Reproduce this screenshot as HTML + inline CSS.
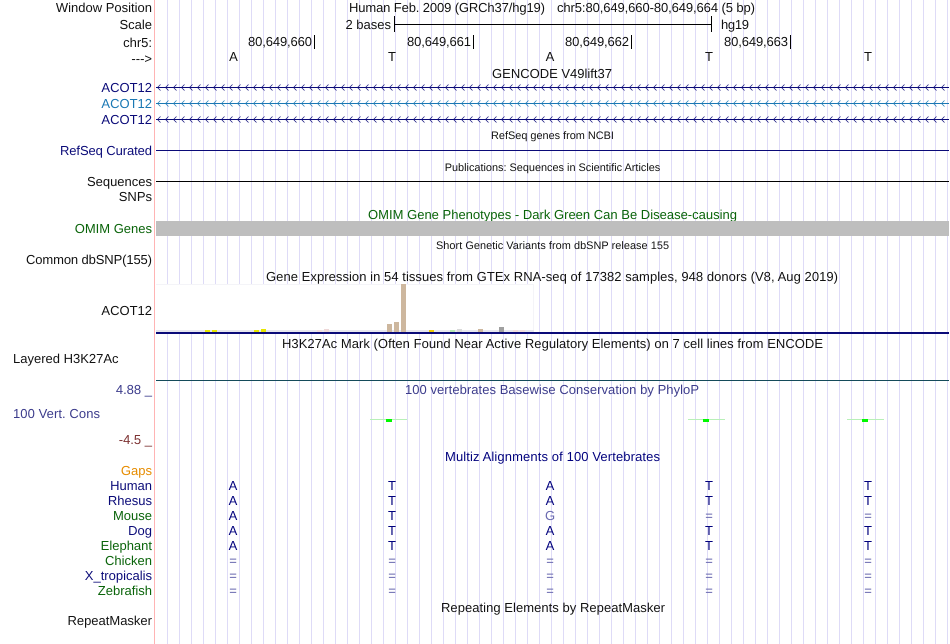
<!DOCTYPE html>
<html><head><meta charset="utf-8"><style>
html,body{margin:0;padding:0;background:#fff;width:950px;height:644px;overflow:hidden}
#g{position:absolute;left:167px;top:0;width:783px;height:644px;background-image:linear-gradient(to right,#dedbf7 0,#dedbf7 1px,transparent 1px,transparent 12px);background-size:12px 644px}
svg{display:block;position:absolute;left:0;top:0}
text{font-family:"Liberation Sans",sans-serif;font-size:13px;fill:#111;text-rendering:geometricPrecision}
.r{text-anchor:end}
.m{text-anchor:middle}
.s{font-size:10.9px}
.n{fill:#0a0a78}
.g{fill:#0a640a}
.b{fill:#00007d}
.e{fill:#6a6ab0}
</style></head><body>
<div id="g"></div>
<svg width="950" height="644" viewBox="0 0 950 644" xmlns="http://www.w3.org/2000/svg">
<defs>
<pattern id="c1" x="157" y="84" width="8" height="7" patternUnits="userSpaceOnUse"><path d="M3.500 .5L.5 3.500L3.500 6.500" fill="none" stroke="#0a0a78" stroke-width=".7"/></pattern>
<pattern id="c2" x="157" y="100" width="8" height="7" patternUnits="userSpaceOnUse"><path d="M3.500 .5L.5 3.500L3.500 6.500" fill="none" stroke="#1a78b4" stroke-width=".7"/></pattern>
<pattern id="c3" x="157" y="116" width="8" height="7" patternUnits="userSpaceOnUse"><path d="M3.500 .5L.5 3.500L3.500 6.500" fill="none" stroke="#0a0a78" stroke-width=".7"/></pattern>
</defs>
<rect x="154" y="0" width="1" height="644" fill="#ffb4b4"/>

<!-- header labels -->
<text class="r" x="152" y="12">Window Position</text>
<text class="r" x="152" y="29">Scale</text>
<text class="r" x="152" y="47">chr5:</text>
<text class="r" x="152" y="63">---&gt;</text>
<text x="349" y="12" textLength="196">Human Feb. 2009 (GRCh37/hg19)</text>
<text x="557" y="12" textLength="198">chr5:80,649,660-80,649,664 (5 bp)</text>
<text class="r" x="391" y="29">2 bases</text>
<rect x="394" y="16" width="1" height="16" fill="#000"/>
<rect x="394" y="24" width="318" height="1" fill="#000"/>
<rect x="711" y="16" width="1" height="16" fill="#000"/>
<text x="721" y="29" textLength="28">hg19</text>
<text x="248" y="46" textLength="64">80,649,660</text><rect x="314" y="35" width="1" height="14" fill="#000"/>
<text x="407" y="46" textLength="64">80,649,661</text><rect x="473" y="35" width="1" height="14" fill="#000"/>
<text x="565" y="46" textLength="64">80,649,662</text><rect x="631" y="35" width="1" height="14" fill="#000"/>
<text x="724" y="46" textLength="64">80,649,663</text><rect x="790" y="35" width="1" height="14" fill="#000"/>
<text class="m" x="233.500" y="61">A</text>
<text class="m" x="392" y="61">T</text>
<text class="m" x="550" y="61">A</text>
<text class="m" x="709" y="61">T</text>
<text class="m" x="868" y="61">T</text>

<!-- gencode -->
<text class="m" x="552" y="78">GENCODE V49lift37</text>
<text class="r n" x="152" y="92">ACOT12</text>
<text class="r" x="152" y="108" style="fill:#1a78b4">ACOT12</text>
<text class="r n" x="152" y="124">ACOT12</text>
<rect x="156" y="87" width="793" height="1" fill="#0a0a78"/>
<rect x="156" y="103" width="793" height="1" fill="#1a78b4"/>
<rect x="156" y="119" width="793" height="1" fill="#0a0a78"/>
<rect x="156" y="84" width="793" height="7" fill="url(#c1)"/>
<rect x="156" y="100" width="793" height="7" fill="url(#c2)"/>
<rect x="156" y="116" width="793" height="7" fill="url(#c3)"/>

<!-- refseq -->
<text class="m s" x="552.500" y="139">RefSeq genes from NCBI</text>
<text class="r n" x="152" y="155" textLength="92">RefSeq Curated</text>
<rect x="156" y="150" width="793" height="1" fill="#0a0a78"/>
<text class="m s" x="552.500" y="171">Publications: Sequences in Scientific Articles</text>
<text class="r" x="152" y="186">Sequences</text>
<rect x="156" y="181" width="793" height="1" fill="#000"/>
<text class="r" x="152" y="201">SNPs</text>

<!-- OMIM -->
<text class="m g" x="552.500" y="219" textLength="369">OMIM Gene Phenotypes - Dark Green Can Be Disease-causing</text>
<text class="r g" x="152" y="233">OMIM Genes</text>
<rect x="156" y="221" width="793" height="15" fill="#bebebe"/>
<text class="m s" x="552.500" y="249" textLength="233">Short Genetic Variants from dbSNP release 155</text>
<text class="r" x="152" y="264" textLength="126">Common dbSNP(155)</text>

<!-- GTEx -->
<text class="m" x="552" y="281" textLength="572">Gene Expression in 54 tissues from GTEx RNA-seq of 17382 samples, 948 donors (V8, Aug 2019)</text>
<text class="r" x="152" y="315">ACOT12</text>
<rect x="156" y="284" width="378" height="47" fill="#fff"/>
<rect x="156" y="284" width="378" height="1" fill="#f4f4f8"/>
<rect x="533" y="284" width="1" height="47" fill="#f4f4f8"/>
<rect x="156" y="330" width="378" height="2" fill="#e6e6ee"/>
<g>
<rect x="205" y="330" width="5" height="2" fill="#e6e600"/>
<rect x="212" y="330" width="5" height="2" fill="#e6e600"/>
<rect x="254" y="330" width="5" height="2" fill="#e6e600"/>
<rect x="261" y="329" width="5" height="3" fill="#e6e600"/>
<rect x="317" y="330" width="5" height="2" fill="#f0dcdc"/>
<rect x="324" y="329" width="5" height="3" fill="#eed8d8"/>
<rect x="387" y="324" width="5" height="8" fill="#cdb79e"/>
<rect x="394" y="322" width="5" height="10" fill="#cdb79e"/>
<rect x="401" y="284" width="5" height="48" fill="#cdb79e"/>
<rect x="429" y="330" width="5" height="2" fill="#eec900"/>
<rect x="450" y="330" width="5" height="2" fill="#b4e6b4"/>
<rect x="457" y="329" width="5" height="3" fill="#d9d9d9"/>
<rect x="478" y="329" width="5" height="3" fill="#cdb79e"/>
<rect x="499" y="327" width="5" height="5" fill="#a0a0a0"/>
<rect x="513" y="330" width="5" height="2" fill="#f0dcdc"/>
<rect x="520" y="330" width="5" height="2" fill="#f0dcdc"/>
</g>
<rect x="156" y="332" width="793" height="2" fill="#0a0a78"/>

<!-- H3K27Ac -->
<text class="m" x="552.500" y="348" textLength="541">H3K27Ac Mark (Often Found Near Active Regulatory Elements) on 7 cell lines from ENCODE</text>
<text x="13" y="363">Layered H3K27Ac</text>
<rect x="156" y="380" width="793" height="1" fill="#144b5a"/>

<!-- Conservation -->
<text class="m" x="552" y="394" textLength="294" style="fill:#3c3c8c">100 vertebrates Basewise Conservation by PhyloP</text>
<text class="r" x="152" y="394" style="fill:#3c3c8c">4.88 _</text>
<text x="13" y="418" textLength="87" style="fill:#3c3c8c">100 Vert. Cons</text>
<text class="r" x="152" y="444" style="fill:#7d3232">-4.5 _</text>
<g>
<rect x="370" y="419" width="37" height="1" fill="#b8f0b8"/><rect x="386" y="419" width="6" height="3" fill="#00f800"/>
<rect x="688" y="419" width="37" height="1" fill="#b8f0b8"/><rect x="703" y="419" width="6" height="3" fill="#00f800"/>
<rect x="847" y="419" width="37" height="1" fill="#b8f0b8"/><rect x="862" y="419" width="6" height="3" fill="#00f800"/>
</g>

<!-- Multiz -->
<text class="m b" x="552.500" y="461" textLength="215">Multiz Alignments of 100 Vertebrates</text>
<text class="r" x="152" y="475" style="fill:#e68c00">Gaps</text>
<text class="r n" x="152" y="490">Human</text>
<text class="r n" x="152" y="505">Rhesus</text>
<text class="r g" x="152" y="520">Mouse</text>
<text class="r n" x="152" y="535">Dog</text>
<text class="r g" x="152" y="550">Elephant</text>
<text class="r g" x="152" y="565">Chicken</text>
<text class="r n" x="152" y="580">X_tropicalis</text>
<text class="r g" x="152" y="595">Zebrafish</text>

<g>
<text class="m b" x="233" y="490">A</text><text class="m b" x="392" y="490">T</text><text class="m b" x="550" y="490">A</text><text class="m b" x="709" y="490">T</text><text class="m b" x="868" y="490">T</text>
<text class="m b" x="233" y="505">A</text><text class="m b" x="392" y="505">T</text><text class="m b" x="550" y="505">A</text><text class="m b" x="709" y="505">T</text><text class="m b" x="868" y="505">T</text>
<text class="m b" x="233" y="520">A</text><text class="m b" x="392" y="520">T</text><text class="m e" x="550" y="520">G</text><text class="m e" x="709" y="520">=</text><text class="m e" x="868" y="520">=</text>
<text class="m b" x="233" y="535">A</text><text class="m b" x="392" y="535">T</text><text class="m b" x="550" y="535">A</text><text class="m b" x="709" y="535">T</text><text class="m b" x="868" y="535">T</text>
<text class="m b" x="233" y="550">A</text><text class="m b" x="392" y="550">T</text><text class="m b" x="550" y="550">A</text><text class="m b" x="709" y="550">T</text><text class="m b" x="868" y="550">T</text>
<text class="m e" x="233" y="565">=</text><text class="m e" x="392" y="565">=</text><text class="m e" x="550" y="565">=</text><text class="m e" x="709" y="565">=</text><text class="m e" x="868" y="565">=</text>
<text class="m e" x="233" y="580">=</text><text class="m e" x="392" y="580">=</text><text class="m e" x="550" y="580">=</text><text class="m e" x="709" y="580">=</text><text class="m e" x="868" y="580">=</text>
<text class="m e" x="233" y="595">=</text><text class="m e" x="392" y="595">=</text><text class="m e" x="550" y="595">=</text><text class="m e" x="709" y="595">=</text><text class="m e" x="868" y="595">=</text>
</g>

<text class="m" x="553" y="612" textLength="224">Repeating Elements by RepeatMasker</text>
<text class="r" x="152" y="625">RepeatMasker</text>
</svg>
</body></html>
